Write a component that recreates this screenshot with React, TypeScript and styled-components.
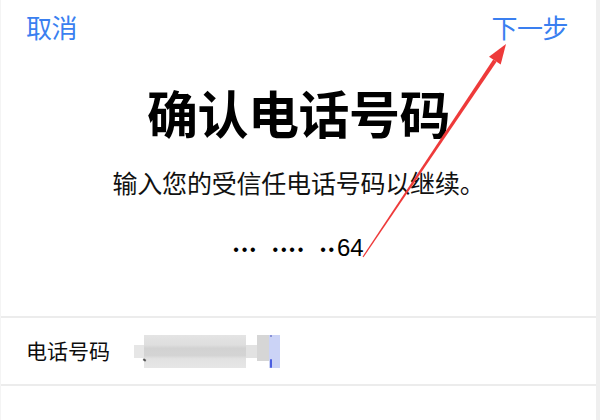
import React from "react";
import styled, { createGlobalStyle } from "styled-components";

const GlobalStyle = createGlobalStyle`
  html, body {
    margin: 0;
    padding: 0;
    background: #ffffff;
  }
  body {
    font-family: "Noto Sans CJK SC", "Noto Sans", sans-serif;
    -webkit-font-smoothing: antialiased;
  }
`;

const Page = styled.div`
  position: relative;
  width: 600px;
  height: 420px;
  box-sizing: border-box;
  overflow: hidden;
  background: #ffffff;
  border-left: 1px solid #f4f4f4;
  border-right: 4px solid #efefef;
  display: flex;
  flex-direction: column;
`;

const NavBar = styled.div`
  display: flex;
  justify-content: space-between;
  align-items: flex-start;
  padding: 14px 28px 0 25px;
`;

const NavButton = styled.span`
  font-size: 26px;
  line-height: 1;
  color: #3a7ff0;
  letter-spacing: -0.5px;
`;

const Title = styled.h1`
  margin: 47px 0 0;
  text-align: center;
  font-size: 51px;
  line-height: 1;
  font-weight: 700;
  color: #000000;
  letter-spacing: -0.5px;
`;

const Subtitle = styled.p`
  margin: 32px 0 0;
  text-align: center;
  font-size: 25px;
  line-height: 1;
  color: #111111;
  letter-spacing: -0.2px;
`;

const MaskedNumber = styled.div`
  margin: 41px 0 0;
  text-align: center;
  font-family: "Liberation Sans", Arial, sans-serif;
  font-size: 24px;
  line-height: 24px;
  height: 24px;
  color: #000000;
  white-space: pre;
`;

const Dots = styled.span`
  font-size: 16px;
  letter-spacing: 2.8px;
  word-spacing: 6.8px;
  vertical-align: 1px;
`;

const Form = styled.div`
  margin-top: 56px;
  border-top: 2px solid #ececec;
  border-bottom: 2px solid #ececec;
`;

const Row = styled.div`
  display: flex;
  align-items: center;
  height: 66px;
  padding-left: 25px;
  gap: 24px;
`;

const Label = styled.span`
  font-size: 21px;
  line-height: 1;
  color: #0d0d0d;
  margin-top: -2px;
`;

const Mosaic = styled.div`
  position: relative;
  display: flex;
  align-items: flex-start;
  height: 33px;
`;

const Tile = styled.div<{ $w: number; $h: number; $top?: number; $bg: string }>`
  width: ${(p) => p.$w}px;
  height: ${(p) => p.$h}px;
  margin-top: ${(p) => p.$top ?? 0}px;
  background: ${(p) => p.$bg};
  flex: none;
`;

const Tick = styled.span`
  position: absolute;
  left: 9px;
  top: 24px;
  width: 3px;
  height: 2px;
  background: #555;
  transform: rotate(35deg);
`;

const Cursor = styled.span`
  position: absolute;
  left: 136px;
  top: 24px;
  width: 2px;
  height: 9px;
  border-radius: 1px;
  background: #4b5ee0;
`;

const CursorTop = styled.span`
  position: absolute;
  left: 136px;
  top: 0;
  width: 2px;
  height: 2px;
  background: #8a93d8;
`;

const Overlay = styled.svg`
  position: absolute;
  left: -1px;
  top: 0;
  width: 600px;
  height: 420px;
  pointer-events: none;
`;

export default function App() {
  return (
    <>
      <GlobalStyle />
      <Page>
        <NavBar>
          <NavButton>取消</NavButton>
          <NavButton>下一步</NavButton>
        </NavBar>
        <Title>确认电话号码</Title>
        <Subtitle>输入您的受信任电话号码以继续。</Subtitle>
        <MaskedNumber>
          <Dots>{"••• •••• ••"}</Dots>64
        </MaskedNumber>
        <Form>
          <Row>
            <Label>电话号码</Label>
            <Mosaic>
              <Tile $w={10} $h={13} $top={10} $bg="#e6e6e6" />
              <Tile
                $w={102}
                $h={33}
                $bg="linear-gradient(180deg, #e4e4e4 0%, #dedede 30%, #d2d2d2 40%, #d4d4d4 62%, #e2e2e2 72%, #e6e6e6 100%)"
              />
              <Tile $w={11} $h={13} $top={10} $bg="#e2e2e2" />
              <Tile $w={12} $h={26} $bg="#d6d6d6" />
              <Tile $w={11} $h={33} $bg="#cbd3f6" />
              <Tick />
              <CursorTop />
              <Cursor />
            </Mosaic>
          </Row>
        </Form>
        <Overlay viewBox="0 0 600 420">
          <polygon
            points="363.5,257.3 362.5,256.7 493.2,59.5 496.6,61.7"
            fill="#ee3a3a"
          />
          <polygon points="506,44 489,56.7 500.7,64.5" fill="#ee3a3a" />
        </Overlay>
      </Page>
    </>
  );
}
